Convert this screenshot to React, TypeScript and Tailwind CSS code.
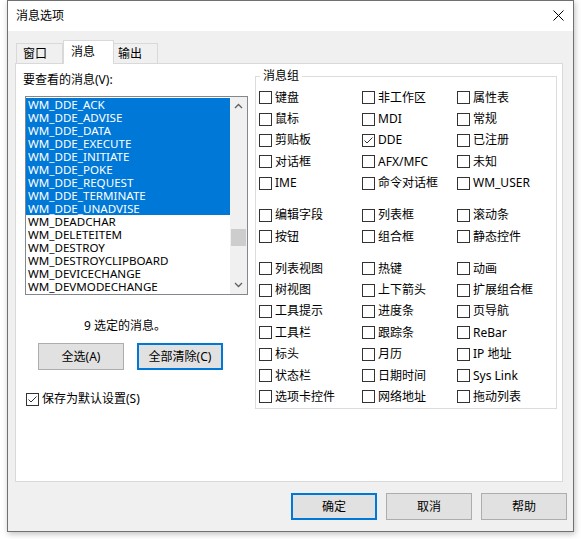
const FONT = "font-['Noto_Sans','Noto_Sans_CJK_SC',sans-serif]"

const MESSAGES: Array<{ name: string; selected: boolean }> = [
  { name: "WM_DDE_ACK", selected: true },
  { name: "WM_DDE_ADVISE", selected: true },
  { name: "WM_DDE_DATA", selected: true },
  { name: "WM_DDE_EXECUTE", selected: true },
  { name: "WM_DDE_INITIATE", selected: true },
  { name: "WM_DDE_POKE", selected: true },
  { name: "WM_DDE_REQUEST", selected: true },
  { name: "WM_DDE_TERMINATE", selected: true },
  { name: "WM_DDE_UNADVISE", selected: true },
  { name: "WM_DEADCHAR", selected: false },
  { name: "WM_DELETEITEM", selected: false },
  { name: "WM_DESTROY", selected: false },
  { name: "WM_DESTROYCLIPBOARD", selected: false },
  { name: "WM_DEVICECHANGE", selected: false },
  { name: "WM_DEVMODECHANGE", selected: false },
]

// each section: rows of three checkboxes
const GROUPS: string[][][] = [
  [
    ["键盘", "非工作区", "属性表"],
    ["鼠标", "MDI", "常规"],
    ["剪贴板", "DDE", "已注册"],
    ["对话框", "AFX/MFC", "未知"],
    ["IME", "命令对话框", "WM_USER"],
  ],
  [
    ["编辑字段", "列表框", "滚动条"],
    ["按钮", "组合框", "静态控件"],
  ],
  [
    ["列表视图", "热键", "动画"],
    ["树视图", "上下箭头", "扩展组合框"],
    ["工具提示", "进度条", "页导航"],
    ["工具栏", "跟踪条", "ReBar"],
    ["标头", "月历", "IP 地址"],
    ["状态栏", "日期时间", "Sys Link"],
    ["选项卡控件", "网络地址", "拖动列表"],
  ],
]

const CHECKED = new Set(["DDE"])

function Box({ checked }: { checked: boolean }) {
  return (
    <span className="flex h-[13px] w-[13px] shrink-0 items-center justify-center border border-[#333333] bg-white">
      {checked && (
        <svg width="11" height="11" viewBox="0 0 11 11">
          <polyline points="1.5,5.5 4,8 9.5,2.5" fill="none" stroke="#333333" strokeWidth="1" />
        </svg>
      )}
    </span>
  )
}

function Check({ label }: { label: string }) {
  return (
    <div className="flex h-[21.4px] items-center">
      <Box checked={CHECKED.has(label)} />
      <span className="ml-[3px] leading-[16px]">{label}</span>
    </div>
  )
}

function Button({ label, primary }: { label: string; primary?: boolean }) {
  return (
    <button
      type="button"
      className={`flex h-[27px] w-[86px] items-center justify-center bg-[#e1e1e1] text-[12px] text-black ${
        primary ? "border-2 border-[#0078d7]" : "border border-[#adadad]"
      }`}
    >
      {label}
    </button>
  )
}

export default function App() {
  return (
    <div className={`h-[539px] w-[581px] overflow-hidden bg-white text-[12px] text-black ${FONT}`}>
      <div className="ml-[7px] flex h-[532px] w-[567px] flex-col border border-[#707070] bg-[#f0f0f0] shadow-[1px_2px_6px_rgba(0,0,0,0.25)]">
        {/* ── Title bar ── */}
        <div className="flex h-[30px] shrink-0 items-center justify-between bg-white pl-[8px] pr-[9px]">
          <span className="leading-[16px]">消息选项</span>
          <svg width="11" height="11" viewBox="0 0 11 11" className="mt-[-2px]">
            <path d="M0.5 0.5 L10.5 10.5 M10.5 0.5 L0.5 10.5" stroke="#000" strokeWidth="1" />
          </svg>
        </div>

        {/* ── Tabs ── */}
        <div className="mt-[9px] flex h-[23px] items-end pl-[8px]">
          <div className="flex h-[20px] w-[47px] items-center border border-b-0 border-[#d9d9d9] pl-[6px]">
            窗口
          </div>
          <div className="relative z-10 mb-[-1px] flex h-[24px] w-[51px] items-center border border-b-0 border-[#d9d9d9] bg-white pb-[1px] pl-[7px]">
            消息
          </div>
          <div className="flex h-[20px] w-[44px] items-center border border-b-0 border-l-0 border-[#d9d9d9] pl-[4px]">
            输出
          </div>
        </div>

        {/* ── Tab panel ── */}
        <div className="ml-[7px] flex h-[419px] w-[548px] border border-[#d9d9d9] bg-white">
          {/* Left column */}
          <div className="flex w-[239px] shrink-0 flex-col">
            <span className="mt-[8px] pl-[7px] leading-[16px]">要查看的消息(V):</span>
            <div className="ml-[9px] mt-[8px] flex h-[199px] w-[223px] border border-[#828790]">
              <div className="flex-1 overflow-hidden pt-px">
                {MESSAGES.map((m) => (
                  <div
                    key={m.name}
                    className={`h-[13px] overflow-hidden pl-[2px] text-[11.6px] leading-[13px] ${
                      m.selected ? "bg-[#0078d7] text-white" : ""
                    }`}
                  >
                    {m.name}
                  </div>
                ))}
              </div>
              <div className="flex w-[17px] flex-col items-center bg-[#f0f0f0]">
                <svg width="9" height="6" viewBox="0 0 9 6" className="mt-[6px]">
                  <polyline points="1,5 4.5,1.5 8,5" fill="none" stroke="#606060" strokeWidth="1.3" />
                </svg>
                <div className="mt-[120px] h-[17px] w-[15px] bg-[#cdcdcd]" />
                <svg width="9" height="6" viewBox="0 0 9 6" className="mb-[6px] mt-auto">
                  <polyline points="1,1 4.5,4.5 8,1" fill="none" stroke="#606060" strokeWidth="1.3" />
                </svg>
              </div>
            </div>

            <span className="mt-[23px] pl-[68px] leading-[16px]">9 选定的消息。</span>

            <div className="mt-[9px] flex gap-[13px] pl-[22px]">
              <Button label="全选(A)" />
              <Button label="全部清除(C)" primary />
            </div>

            <div className="mt-[21px] flex h-[16px] items-center pl-[10px]">
              <Box checked />
              <span className="ml-[3px] leading-[16px]">保存为默认设置(S)</span>
            </div>
          </div>

          {/* Message groups */}
          <div className="relative mt-[12px] h-[333px] w-[302px] border border-[#dcdcdc] pl-[3px] pt-[10px]">
            <span className="absolute left-[4px] top-[-9px] bg-white px-[3px] leading-[16px]">消息组</span>
            {GROUPS.map((section, i) => (
              <div key={i} className={i > 0 ? "mt-[10.6px]" : ""}>
                {section.map((row) => (
                  <div key={row[0]} className="grid grid-cols-[103px_95px_1fr]">
                    {row.map((label) => (
                      <Check key={label} label={label} />
                    ))}
                  </div>
                ))}
              </div>
            ))}
          </div>
        </div>

        {/* ── Dialog buttons ── */}
        <div className="mt-[11px] flex justify-end gap-[9px] pr-[6px]">
          <Button label="确定" primary />
          <Button label="取消" />
          <Button label="帮助" />
        </div>
      </div>
    </div>
  )
}
